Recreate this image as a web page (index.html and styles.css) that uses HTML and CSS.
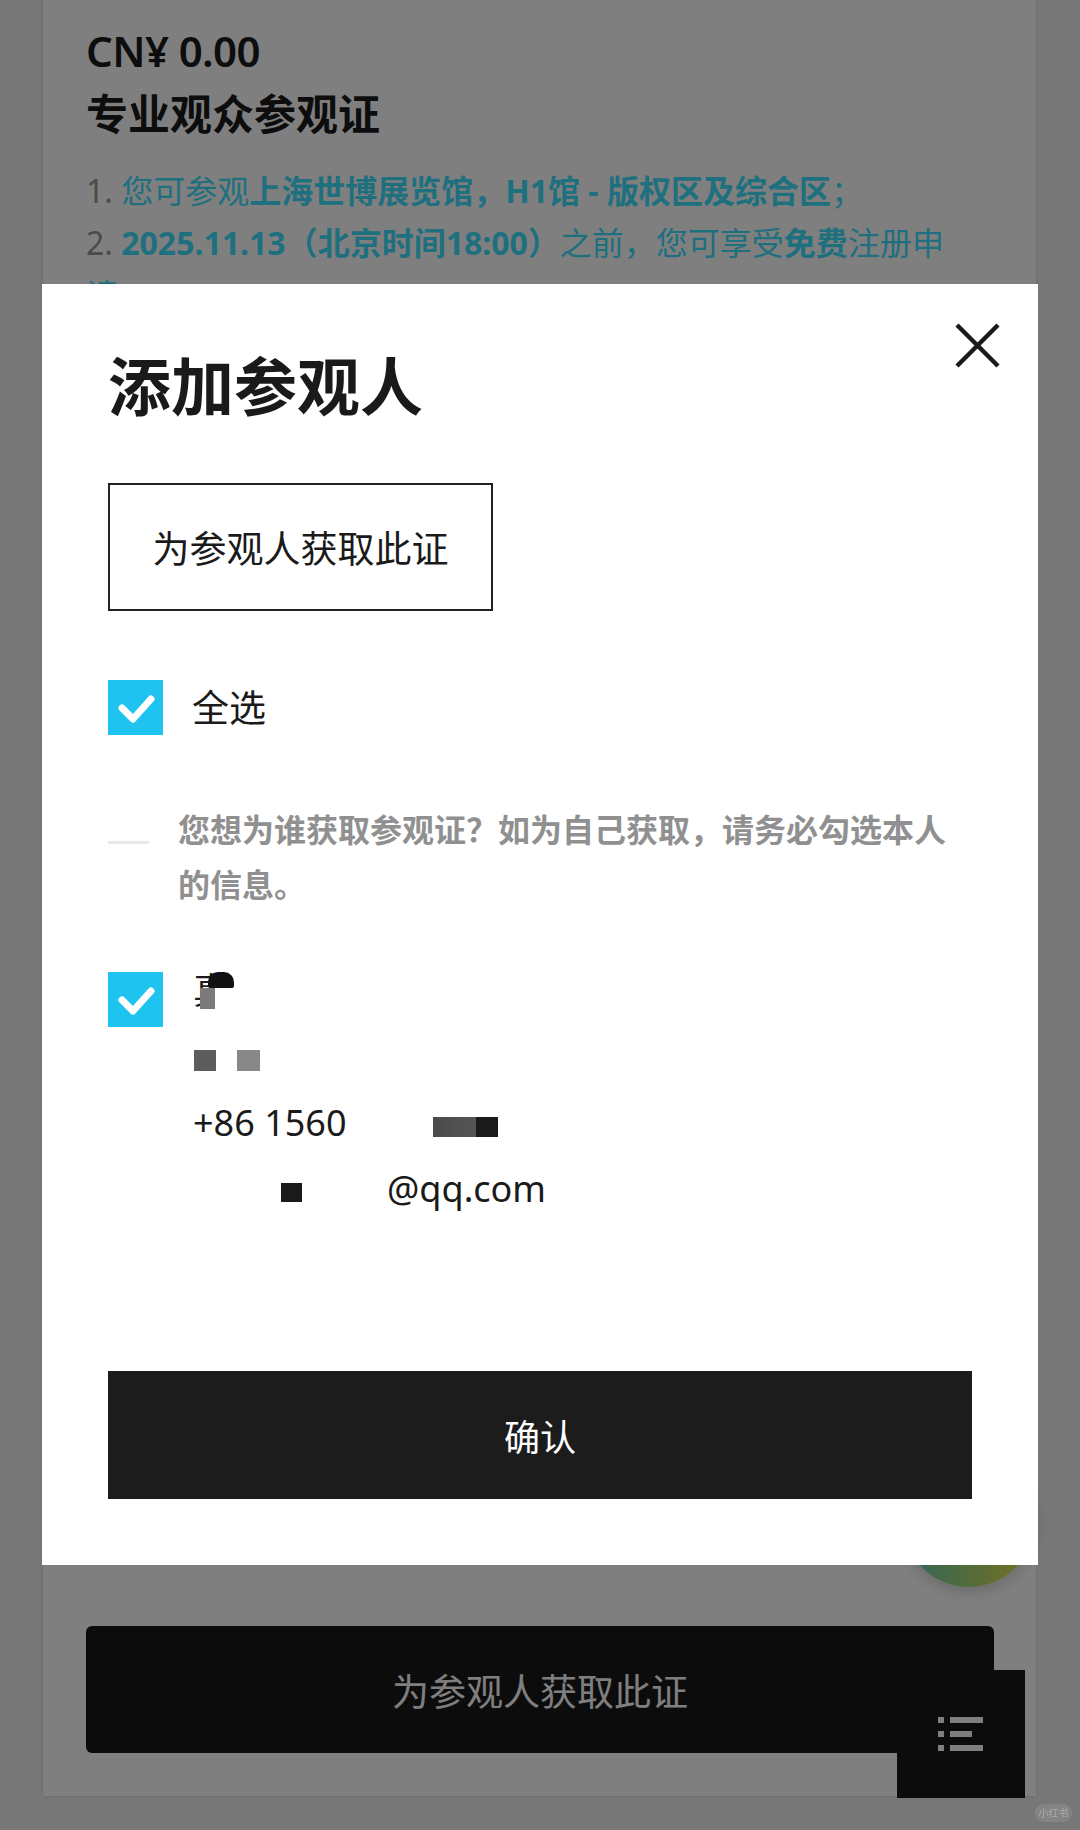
FILE: index.html
```html
<!DOCTYPE html>
<html lang="zh-CN">
<head>
    <meta charset="UTF-8">
    <meta name="viewport" content="width=device-width, initial-scale=1.0">
    <title>添加参观人</title>
    <link rel="stylesheet" href="styles.css">
</head>
<body>
    <div class="page">
        <!-- Pass card behind the dialog -->
        <div class="pass-card">
            <div class="price">CN¥ 0.00</div>
            <h2 class="pass-name">专业观众参观证</h2>
            <div class="pass-notes">
                <p><span class="num">1.</span> <span class="hl">您可参观<b>上海世博展览馆，H1馆 - 版权区及综合区</b>；</span></p>
                <p><span class="num">2.</span> <span class="hl"><b>2025.11.13（北京时间18:00）</b>之前，您可享受<b>免费</b>注册申请</span></p>
            </div>

            <div class="chat-bubble"></div>

            <button class="get-pass-btn">为参观人获取此证</button>
        </div>

        <button class="menu-fab">
            <svg width="128" height="128" viewBox="0 0 128 128">
                <rect x="41" y="47" width="6" height="6" fill="#fff"/>
                <rect x="53" y="47" width="33" height="6" fill="#fff"/>
                <rect x="41" y="61" width="6" height="6" fill="#fff"/>
                <rect x="53" y="61" width="22" height="6" fill="#fff"/>
                <rect x="41" y="75" width="6" height="6" fill="#fff"/>
                <rect x="53" y="75" width="33" height="6" fill="#fff"/>
            </svg>
        </button>
    </div>

    <div class="backdrop"></div>

    <!-- Dialog -->
    <div class="modal">
        <button class="close-btn">
            <svg width="45" height="45" viewBox="0 0 45 45">
                <path d="M2 2 L43 43 M43 2 L2 43" stroke="#1a1a1a" stroke-width="4.5" fill="none"/>
            </svg>
        </button>

        <h1 class="modal-title">添加参观人</h1>

        <button class="outline-btn">为参观人获取此证</button>

        <div class="check-row select-all">
            <span class="checkbox checked">
                <svg width="55" height="55" viewBox="0 0 55 55">
                    <path d="M14 28 L25 39 L43 19" stroke="#fff" stroke-width="7" stroke-linecap="round" stroke-linejoin="round" fill="none"/>
                </svg>
            </span>
            <span class="check-label">全选</span>
        </div>

        <div class="note-row">
            <span class="note-dash"></span>
            <p class="note-text">您想为谁获取参观证？如为自己获取，请务必勾选本人的信息。</p>
        </div>

        <div class="check-row person">
            <span class="checkbox checked">
                <svg width="55" height="55" viewBox="0 0 55 55">
                    <path d="M14 28 L25 39 L43 19" stroke="#fff" stroke-width="7" stroke-linecap="round" stroke-linejoin="round" fill="none"/>
                </svg>
            </span>
            <div class="person-info">
                <div class="info-line name"><span class="masked-char">真<i class="blob"></i><i class="patch"></i></span></div>
                <div class="info-line"><i class="mosaic dark"></i><i class="mosaic light"></i></div>
                <div class="info-line">+86 1560<span class="gap-blank"></span><i class="mosaic bar"></i></div>
                <div class="info-line"><span class="email-mask"><i class="mosaic dot"></i></span>@qq.com</div>
            </div>
        </div>

        <button class="confirm-btn">确认</button>
    </div>

    <div class="watermark">小红书</div>
</body>
</html>
```

FILE: styles.css
```css
* {
    box-sizing: border-box;
}

body {
    margin: 0;
    height: 1830px;
    overflow: hidden;
    background: #eeeeee;
    font-family: "Noto Sans", "Noto Sans CJK SC", sans-serif;
    color: #222;
}

button {
    font-family: inherit;
    cursor: pointer;
}

.page {
    position: relative;
    height: 1830px;
}

/* Card under the dialog */
.pass-card {
    position: relative;
    margin: 0 44px 0 43px;
    min-height: 1796px;
    padding: 22px 42px 43px 43px;
    background: #fff;
    box-shadow: 0 0 3px rgba(0, 0, 0, 0.12);
    display: flex;
    flex-direction: column;
}

.price {
    font-size: 42px;
    line-height: 58px;
    font-weight: 600;
    letter-spacing: -0.6px;
    color: #1a1a1a;
}

.pass-name {
    margin: 5px 0 0;
    font-size: 42px;
    line-height: 58px;
    font-weight: 700;
    color: #1a1a1a;
}

.pass-notes {
    margin-top: 22px;
    width: 860px;
    font-size: 32px;
    line-height: 52px;
}

.pass-notes p {
    margin: 0;
}

.pass-notes .num {
    color: #969696;
}

.pass-notes .hl {
    color: #3ee0ff;
}

.chat-bubble {
    position: absolute;
    left: 860px;
    top: 1455px;
    width: 132px;
    height: 132px;
    border-radius: 50%;
    background: linear-gradient(90deg, #5fd0b0, #f0e040);
    box-shadow: 0 6px 14px rgba(0, 0, 0, 0.15);
}

.get-pass-btn {
    margin-top: auto;
    height: 127px;
    width: 100%;
    border: none;
    border-radius: 6px;
    background: #181818;
    color: #fff;
    font-size: 37px;
}

.menu-fab {
    position: absolute;
    left: 897px;
    top: 1670px;
    width: 128px;
    height: 128px;
    padding: 0;
    border: none;
    background: #181818;
}

.menu-fab svg {
    display: block;
}

.backdrop {
    position: fixed;
    inset: 0;
    background: rgba(0, 0, 0, 0.5);
}

/* Dialog */
.modal {
    position: absolute;
    top: 284px;
    left: 42px;
    width: 996px;
    padding: 0 66px 66px;
    background: #fff;
}

.close-btn {
    position: absolute;
    top: 39px;
    right: 38px;
    width: 45px;
    height: 45px;
    padding: 0;
    border: none;
    background: none;
}

.close-btn svg {
    display: block;
}

.modal-title {
    margin: 65px 0 0;
    font-size: 63px;
    line-height: 74px;
    font-weight: 700;
    color: #1a1a1a;
}

.outline-btn {
    display: block;
    margin-top: 60px;
    width: 385px;
    height: 128px;
    border: 2px solid #222;
    background: #fff;
    font-size: 37px;
    color: #1a1a1a;
}

.check-row {
    display: flex;
    gap: 29px;
}

.select-all {
    margin-top: 69px;
    align-items: center;
}

.checkbox {
    width: 55px;
    height: 55px;
    flex: none;
    background: #1fc3ef;
}

.checkbox svg {
    display: block;
}

.check-label {
    font-size: 37px;
    line-height: 50px;
    color: #1a1a1a;
}

.note-row {
    display: flex;
    gap: 29px;
    margin-top: 67px;
}

.note-dash {
    flex: none;
    width: 41px;
    height: 3px;
    margin-top: 39px;
    background: #e8e8e8;
}

.note-text {
    margin: 0;
    flex: 1;
    font-size: 32px;
    line-height: 55px;
    font-weight: 700;
    color: #909090;
}

.person {
    margin-top: 46px;
    align-items: flex-start;
    gap: 30px;
}

.person .checkbox {
    margin-top: 14px;
}

.person-info {
    font-size: 36px;
    line-height: 66px;
    color: #1a1a1a;
}

.info-line {
    height: 66px;
    display: flex;
    align-items: center;
}

.masked-char {
    position: relative;
    display: inline-block;
    line-height: 66px;
}

.masked-char .blob {
    position: absolute;
    left: 15px;
    top: 14px;
    width: 26px;
    height: 16px;
    border-radius: 10px 10px 2px 2px;
    background: #111;
}

.masked-char .patch {
    position: absolute;
    left: 7px;
    top: 30px;
    width: 15px;
    height: 21px;
    background: #7a7a7a;
}

.masked-char::after {
    content: "";
    position: absolute;
    left: 22px;
    top: 30px;
    width: 20px;
    height: 26px;
    background: #fff;
}

.mosaic {
    display: inline-block;
}

.mosaic.dark {
    width: 22px;
    height: 21px;
    margin-top: 6px;
    margin-left: 1px;
    background: #5c5c5c;
}

.mosaic.light {
    width: 23px;
    height: 21px;
    margin-top: 6px;
    margin-left: 21px;
    background: #888;
}

.gap-blank {
    display: inline-block;
    width: 86px;
}

.mosaic.bar {
    width: 65px;
    height: 20px;
    margin-top: 8px;
    background: linear-gradient(90deg, #4a4a4a 0, #555 66%, #1a1a1a 66%);
}

.email-mask {
    display: inline-block;
    width: 194px;
    height: 66px;
    position: relative;
}

.mosaic.dot {
    position: absolute;
    left: 88px;
    top: 27px;
    width: 21px;
    height: 19px;
    background: #1a1a1a;
}

.confirm-btn {
    display: block;
    margin-top: 149px;
    width: 100%;
    height: 128px;
    border: none;
    background: #1c1c1c;
    color: #fff;
    font-size: 36px;
}

.watermark {
    position: absolute;
    left: 1035px;
    top: 1804px;
    width: 37px;
    height: 18px;
    border-radius: 9px;
    background: rgba(255, 255, 255, 0.1);
    color: rgba(255, 255, 255, 0.3);
    font-size: 10px;
    line-height: 18px;
    text-align: center;
}
```
